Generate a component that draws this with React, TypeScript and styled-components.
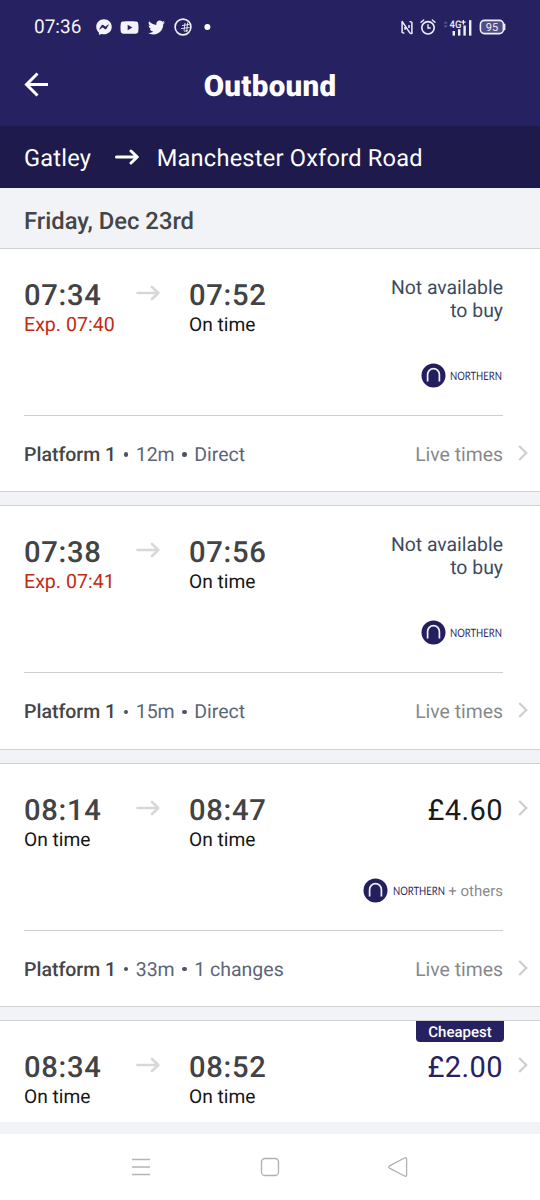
import React from "react";
import styled, { createGlobalStyle } from "styled-components";
import { FaFacebookMessenger, FaYoutube, FaTwitter } from "react-icons/fa";

const GlobalStyle = createGlobalStyle`
  * { box-sizing: border-box; }
  body {
    margin: 0;
    background: #fff;
    font-family: Roboto, "Liberation Sans", sans-serif;
    text-rendering: geometricPrecision;
  }
`;

const Screen = styled.div`
  width: 540px;
  height: 1200px;
  display: flex;
  flex-direction: column;
  overflow: hidden;
  background: #f2f3f6;
`;

const TopBar = styled.header`
  flex: none;
  height: 126px;
  background: #262161;
  color: #fff;
`;

const StatusBar = styled.div`
  display: flex;
  align-items: center;
  justify-content: space-between;
  height: 54px;
  padding: 0 34px;
`;

const StatusGroup = styled.div<{ $gap: number }>`
  display: flex;
  align-items: center;
  gap: ${(p) => p.$gap}px;
  color: #f4f3fa;
`;

const Clock = styled.span`
  width: 53px;
  font-size: 19px;
  line-height: 24px;
`;

const TitleRow = styled.div`
  display: grid;
  grid-template-columns: 24px 1fr 24px;
  align-items: center;
  height: 62px;
  padding: 0 24px;
`;

const Title = styled.h1`
  margin: 0;
  text-align: center;
  font-size: 29.5px;
  font-weight: 900;
  line-height: 34px;
  letter-spacing: 0.3px;
  padding-top: 3px;
`;

const RouteBar = styled.div`
  flex: none;
  display: flex;
  align-items: center;
  height: 62px;
  padding: 2px 24px 0;
  background: #1e1a4c;
  color: #fff;
  font-size: 23.6px;
  letter-spacing: 0.22px;
  svg { margin: -2px 17.5px 0 24px; }
`;

const DateBar = styled.div`
  flex: none;
  height: 60px;
  padding: 5px 24px 0;
  background: #f2f3f6;
  color: #444547;
  font-size: 23.8px;
  font-weight: 500;
  line-height: 56px;
`;

const List = styled.main`
  flex: none;
  height: 874px;
  overflow: hidden;
`;

const Card = styled.article`
  height: 244.33px;
  margin-bottom: 13px;
  padding: 0 12px 0 24px;
  border-top: 1px solid #cfd1d4;
  border-bottom: 1px solid #cfd1d4;
  background: #fff;
`;

const Journey = styled.section`
  position: relative;
  display: grid;
  grid-template-columns: 111px 54px 1fr auto;
  height: 167px;
  margin-right: 25px;
  padding-top: 28px;
  border-bottom: 1px solid #cbcfd2;
`;

const Stop = styled.div``;

const Time = styled.div`
  color: #424344;
  font-size: 29.2px;
  font-weight: 500;
  line-height: 38px;
  letter-spacing: 0.7px;
`;

const Status = styled.div<{ $late?: boolean }>`
  margin-top: -2px;
  color: ${(p) => (p.$late ? "#c22a13" : "#161616")};
  font-size: ${(p) => (p.$late ? 19.6 : 19.2)}px;
  line-height: 23px;
  white-space: nowrap;
`;

const ArrowCell = styled.div`
  padding: 7px 0 0 1px;
  svg { display: block; }
`;

const Offer = styled.div`
  display: flex;
  flex-direction: column;
  align-items: flex-end;
  text-align: right;
`;

const Unavailable = styled.div`
  height: 86.5px;
  margin-top: -1px;
  color: #3c4a5e;
  font-size: 19.4px;
  line-height: 23px;
`;

const Price = styled.div<{ $best?: boolean }>`
  height: 85.5px;
  color: ${(p) => (p.$best ? "#262161" : "#1b1b1c")};
  font-size: 29px;
  line-height: 38px;
  letter-spacing: 0.4px;
`;

const Operator = styled.div`
  display: flex;
  align-items: center;
  height: 26px;
  color: #8b8b8d;
  font-size: 15px;
  white-space: nowrap;
`;

const OperatorName = styled.span`
  width: 53px;
  margin-left: 4.5px;
`;

const OperatorText = styled.span`
  display: inline-block;
  color: #2b2763;
  font-family: Lato, sans-serif;
  font-size: 11.6px;
  line-height: 16px;
  transform: scaleX(0.815);
  transform-origin: left center;
`;

const Others = styled.span`
  margin: 1px 0 0 2.5px;
`;

const RowChevron = styled.span`
  position: absolute;
  right: -25px;
  top: 35px;
  svg { display: block; }
`;

const Badge = styled.span`
  position: absolute;
  right: -1px;
  top: 0;
  width: 88px;
  height: 21px;
  border-radius: 0 0 4px 4px;
  background: #262161;
  color: #fff;
  font-size: 15px;
  font-weight: 500;
  line-height: 22px;
  text-align: center;
`;

const Footer = styled.section`
  display: flex;
  align-items: center;
  height: 75px;
  padding-top: 2px;
  color: #5c6577;
  font-size: 19.5px;
  svg { margin: -3px 0 0 15px; }
`;

const Platform = styled.span`
  color: #444547;
  font-weight: 500;
`;

const Dot = styled.i`
  width: 4.5px;
  height: 4.5px;
  margin: 0 7.5px;
  border-radius: 50%;
  background: #4b5365;
`;

const LiveTimes = styled.span`
  margin-left: auto;
  color: #87888a;
  font-size: 19.4px;
`;

const NavBar = styled.nav`
  flex: none;
  display: flex;
  align-items: center;
  justify-content: center;
  gap: 108px;
  height: 66px;
  margin-top: 12px;
  background: #fff;
`;

function Arrow({ color, stroke = 3 }: { color: string; stroke?: number }) {
  return (
    <svg width="24" height="18" viewBox="0 0 24 18" fill="none" stroke={color} strokeWidth={stroke} strokeLinecap="round" strokeLinejoin="round">
      <path d="M1.5 9H22M16 3L22.3 9L16 15" />
    </svg>
  );
}

function Chevron() {
  return (
    <svg width="10" height="18" viewBox="0 0 10 18" fill="none" stroke="#cfcfd1" strokeWidth="2.3">
      <path d="M1.2 2L8.2 9L1.2 16" />
    </svg>
  );
}

function OperatorLogo() {
  return (
    <svg width="25" height="25" viewBox="0 0 25 25">
      <circle cx="12.5" cy="12.5" r="12" fill="#231f5c" />
      <path d="M6.6 18.6V11.5A5.9 5.9 0 0 1 18.4 11.5V18.6" fill="none" stroke="#f2f1fa" strokeWidth="1.7" />
    </svg>
  );
}

function BallIcon() {
  return (
    <svg width="18" height="18" viewBox="0 0 18 18" fill="none" stroke="#f0eff8">
      <circle cx="9" cy="9" r="7.9" strokeWidth="1.6" />
      <path d="M8 7.6L15.5 6.4M7 10.6L15.6 9.5M10 13.2L14 12.6M11 5L10 12.6M13.6 4.6L12.6 14" strokeWidth="0.9" />
    </svg>
  );
}

function NfcIcon() {
  return (
    <svg width="12" height="15" viewBox="0 0 12 15" fill="none" stroke="#f0eff8" strokeWidth="1.5" strokeLinejoin="round">
      <path d="M3.4 13.4L1.1 12.4V1.4L9 13.2V13.4M4 7V9.8M8.6 1.4L10.9 2.4V13.6L9 13.2M8 8V5" />
    </svg>
  );
}

function AlarmIcon() {
  return (
    <svg width="16" height="16" viewBox="0 0 16 16" fill="none" stroke="#f0eff8" strokeWidth="1.6" strokeLinecap="round">
      <circle cx="8" cy="8.8" r="6.2" />
      <path d="M8 5.8V9H10.2M1 3.2L3.7 1M15 3.2L12.3 1" strokeWidth="1.4" />
    </svg>
  );
}

function SignalIcon() {
  return (
    <svg width="29" height="17" viewBox="0 0 29 17">
      <path fill="#625e91" d="M.6 4.6L2.6 2.2L4.6 4.6ZM.6 6.4L2.6 8.8L4.6 6.4Z" />
      <g fill="#f0eff8">
        <rect x="9.6" y="12" width="2.4" height="4.6" />
        <rect x="15" y="10.2" width="2.4" height="6.4" />
        <rect x="20.4" y="6.5" width="2.4" height="10.1" />
        <rect x="26" y="1.2" width="2.4" height="15.4" />
        <text x="6.5" y="8.8" fontSize="10.5" fontWeight="500" fontFamily="Roboto" textLength="12" lengthAdjust="spacingAndGlyphs">4G</text>
      </g>
      <path d="M20.4 1V5.4M18.2 3.2H22.6" stroke="#f0eff8" strokeWidth="1.3" />
    </svg>
  );
}

function BatteryIcon() {
  return (
    <svg width="27" height="16" viewBox="0 0 27 16">
      <rect x="1.4" y="1.4" width="23" height="13.2" rx="4" fill="#514d85" stroke="#f0eff8" strokeWidth="1.6" />
      <path d="M25.6 5.4V10.6" stroke="#f0eff8" strokeWidth="1.6" strokeLinecap="round" />
      <text x="12.9" y="12" fill="#f0eff8" fontSize="11" fontFamily="Roboto" textAnchor="middle">95</text>
    </svg>
  );
}

type Trip = {
  depart: string;
  departStatus: string;
  late?: boolean;
  arrive: string;
  price?: string;
  best?: boolean;
  others?: boolean;
  operator?: boolean;
  details?: { platform: string; duration: string; route: string };
};

const trips: Trip[] = [
  { depart: "07:34", departStatus: "Exp. 07:40", late: true, arrive: "07:52", operator: true, details: { platform: "Platform 1", duration: "12m", route: "Direct" } },
  { depart: "07:38", departStatus: "Exp. 07:41", late: true, arrive: "07:56", operator: true, details: { platform: "Platform 1", duration: "15m", route: "Direct" } },
  { depart: "08:14", departStatus: "On time", arrive: "08:47", price: "£4.60", operator: true, others: true, details: { platform: "Platform 1", duration: "33m", route: "1 changes" } },
  { depart: "08:34", departStatus: "On time", arrive: "08:52", price: "£2.00", best: true },
];

function TripCard({ trip }: { trip: Trip }) {
  return (
    <Card>
      <Journey>
        <Stop>
          <Time>{trip.depart}</Time>
          <Status $late={trip.late}>{trip.departStatus}</Status>
        </Stop>
        <ArrowCell><Arrow color="#d8d8da" stroke={2.6} /></ArrowCell>
        <Stop>
          <Time>{trip.arrive}</Time>
          <Status>On time</Status>
        </Stop>
        <Offer>
          {trip.price ? (
            <Price $best={trip.best}>{trip.price}</Price>
          ) : (
            <Unavailable>Not available<br />to buy</Unavailable>
          )}
          {trip.operator && (
            <Operator>
              <OperatorLogo />
              <OperatorName><OperatorText>NORTHERN</OperatorText></OperatorName>
              {trip.others && <Others>+ others</Others>}
            </Operator>
          )}
        </Offer>
        {trip.price && <RowChevron><Chevron /></RowChevron>}
        {trip.best && <Badge>Cheapest</Badge>}
      </Journey>
      {trip.details && (
        <Footer>
          <Platform>{trip.details.platform}</Platform>
          <Dot />
          <span>{trip.details.duration}</span>
          <Dot />
          <span>{trip.details.route}</span>
          <LiveTimes>Live times</LiveTimes>
          <Chevron />
        </Footer>
      )}
    </Card>
  );
}

export default function App() {
  return (
    <Screen>
      <GlobalStyle />
      <TopBar>
        <StatusBar>
          <StatusGroup $gap={8.7}>
            <Clock>07:36</Clock>
            <FaFacebookMessenger size={16} />
            <FaYoutube size={19} />
            <FaTwitter size={17} />
            <BallIcon />
            <svg width="14" height="8" viewBox="0 0 14 8"><circle cx="7.4" cy="4" r="3" fill="#fff" /></svg>
          </StatusGroup>
          <StatusGroup $gap={7}>
            <NfcIcon />
            <AlarmIcon />
            <SignalIcon />
            <BatteryIcon />
          </StatusGroup>
        </StatusBar>
        <TitleRow>
          <svg width="24" height="26" viewBox="0 0 24 26" fill="none" stroke="#fff" strokeWidth="3">
            <path d="M24 12.5H2.5M13.5 1.5L2.5 12.5L13.5 23.5" />
          </svg>
          <Title>Outbound</Title>
        </TitleRow>
      </TopBar>
      <RouteBar>
        <span>Gatley</span>
        <Arrow color="#fff" />
        <span>Manchester Oxford Road</span>
      </RouteBar>
      <DateBar>Friday, Dec 23rd</DateBar>
      <List>
        {trips.map((t) => <TripCard key={t.depart} trip={t} />)}
      </List>
      <NavBar>
        <svg width="20" height="20" viewBox="0 0 20 20" stroke="#b5b5b7" strokeWidth="1.3"><path d="M0 2.5H18M0 10H18M0 17.5H18" /></svg>
        <svg width="20" height="20" viewBox="0 0 20 20" fill="none" stroke="#b0b0b2" strokeWidth="1.3"><rect x="1.5" y="1.5" width="17" height="17" rx="3.5" /></svg>
        <svg width="20" height="20" viewBox="0 0 20 20" fill="none" stroke="#b0b0b2" strokeWidth="1.3" strokeLinejoin="round"><path d="M1.5 8.9L16.5 1Q18.6 .2 18.6 2V18Q18.6 19.8 16.5 19L1.5 11.1Q0 10 1.5 8.9Z" /></svg>
      </NavBar>
    </Screen>
  );
}
